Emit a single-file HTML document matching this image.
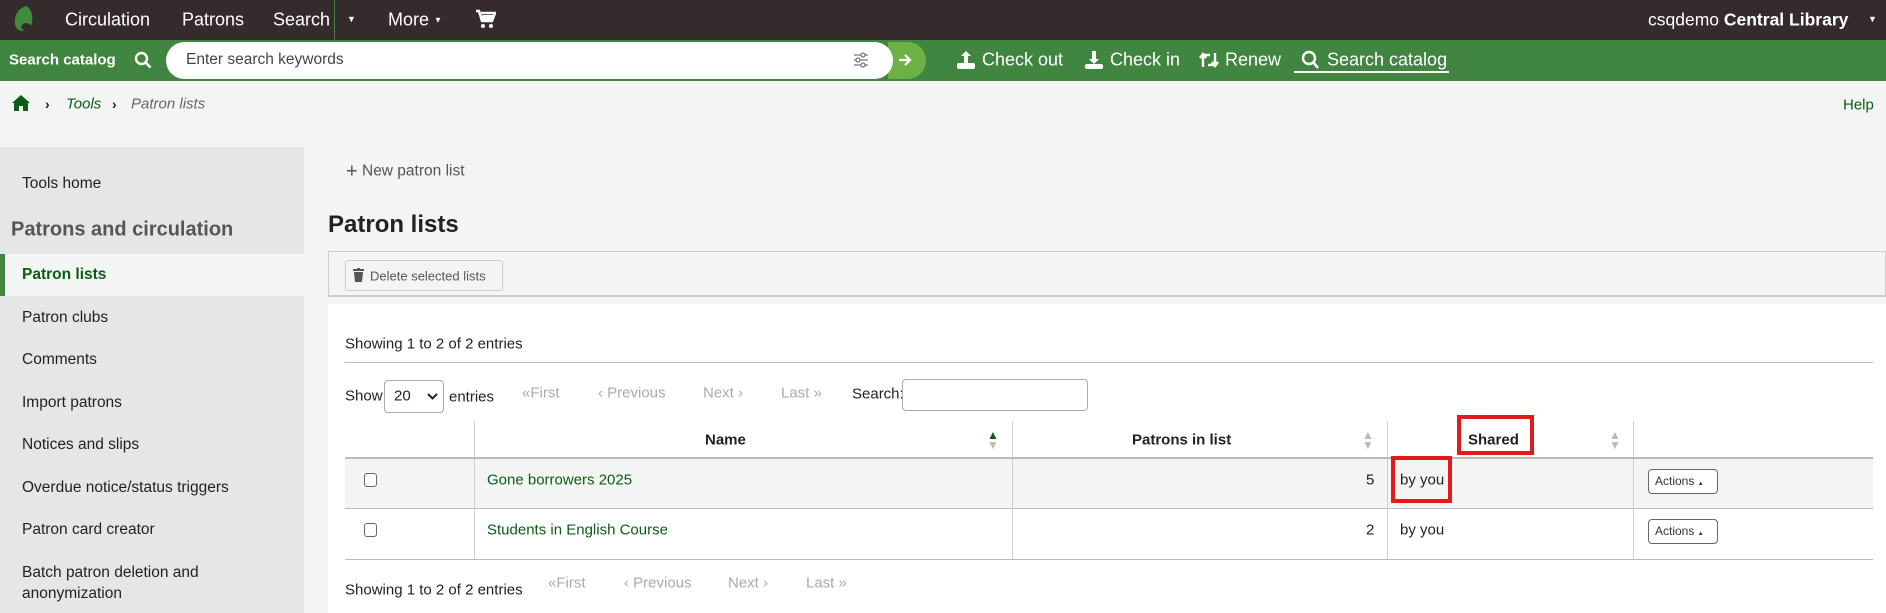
<!DOCTYPE html>
<html><head><meta charset="utf-8"><style>
*{box-sizing:border-box;margin:0;padding:0}
body{width:1886px;height:613px;overflow:hidden;background:#f3f4f4;font-family:"Liberation Sans",sans-serif;font-size:15px;color:#222;position:relative}
.a{position:absolute;white-space:nowrap}
.top{left:0;top:0;width:1886px;height:40px;background:#352b2d;color:#fff;font-size:18px}
.grn{left:0;top:40px;width:1886px;height:41px;background:#408540;color:#fff}
.side{left:0;top:147px;width:304px;height:466px;background:#e6e6e6}
.si{left:22px;font-size:15.5px;color:#222;transform:translateY(-50%)}
.c{transform:translateY(-50%)}
.pg{color:#aaa;font-size:15px}
.vl{position:absolute;width:1px;background:#d0d0d0}
.btn{border:1px solid #666;border-radius:4px;background:#fff;font-size:12px;color:#333;padding:0 0 0 6px;line-height:23px;width:70px;height:25px}
.red{border:4px solid #e3191c}
.so{font-size:12px;color:#bbb;line-height:10px}
</style></head><body>
<div class="a top">
  <svg class="a" style="left:12px;top:5px" width="22" height="28" viewBox="0 0 22 28"><path d="M14 1C5 4 2 12 3 19c1 6 6 8 9 6-3-1-4-4-1-6 3-2 7-1 8 2 3-8 1-17-5-20z" fill="#3f8c3e"/></svg>
  <span class="a c" style="left:65px;top:20px">Circulation</span>
  <span class="a c" style="left:182px;top:20px">Patrons</span>
  <span class="a c" style="left:273px;top:20px">Search</span>
  <div class="a" style="left:334px;top:0;width:1px;height:40px;background:#408540"></div>
  <span class="a c" style="left:347px;top:19px;font-size:9px">▼</span>
  <span class="a c" style="left:388px;top:20px">More <span style="font-size:8px;vertical-align:3px">▼</span></span>
  <svg class="a" style="left:476px;top:9px" width="20" height="20" viewBox="0 0 20 20"><path d="M0 2h3l3 10h10l3-8H5" fill="none" stroke="#fff" stroke-width="2.5"/><rect x="6" y="6" width="11" height="5" fill="#fff"/><circle cx="7" cy="17" r="2" fill="#fff"/><circle cx="15" cy="17" r="2" fill="#fff"/></svg>
  <span class="a c" style="left:1648px;top:20px;font-size:17.5px">csqdemo <b>Central Library</b></span>
  <span class="a c" style="left:1868px;top:19px;font-size:9px">▼</span>
</div>
<div class="a grn">
  <span class="a c" style="left:9px;top:20px;font-weight:bold;font-size:15px">Search catalog</span>
  <svg class="a" style="left:134px;top:11px" width="18" height="18" viewBox="0 0 18 18"><circle cx="7.5" cy="7.5" r="5.5" fill="none" stroke="#fff" stroke-width="2.4"/><path d="M11.5 11.5l5 5" stroke="#fff" stroke-width="2.6"/></svg>
  <div class="a" style="left:888px;top:2px;width:38px;height:37px;background:#6db146;border-radius:0 19px 19px 0"></div>
  <div class="a" style="left:166px;top:2px;width:727px;height:37px;background:#fff;border-radius:19px"></div>
  <span class="a c" style="left:186px;top:20px;color:#444;font-size:15.5px">Enter search keywords</span>
  <svg class="a" style="left:853px;top:12px" width="16" height="16" viewBox="0 0 16 16" stroke="#777" stroke-width="1.3" fill="#fff"><path d="M1 3h14M1 8h14M1 13h14"/><circle cx="10" cy="3" r="2"/><circle cx="5" cy="8" r="2"/><circle cx="10" cy="13" r="2"/></svg>
  <svg class="a" style="left:898px;top:13px" width="14" height="14" viewBox="0 0 14 14"><path d="M1 7h11M7 2l5 5-5 5" fill="none" stroke="#fff" stroke-width="2.2"/></svg>
  <svg class="a" style="left:956px;top:10px" width="20" height="20" viewBox="0 0 20 20" fill="#fff"><path d="M10 1l-5 5h3v7h4V6h3z"/><rect x="1" y="13" width="18" height="6" rx="2"/></svg>
  <span class="a c" style="left:982px;top:20px;font-size:18px">Check out</span>
  <svg class="a" style="left:1084px;top:10px" width="20" height="20" viewBox="0 0 20 20" fill="#fff"><path d="M10 14l-5-5h3V1h4v8h3z"/><rect x="1" y="14" width="18" height="5" rx="2"/></svg>
  <span class="a c" style="left:1110px;top:20px;font-size:18px">Check in</span>
  <svg class="a" style="left:1199px;top:12px" width="20" height="16" viewBox="0 0 20 16" fill="none" stroke="#fff" stroke-width="2.4"><path d="M4 15V3h7M1 6l3-4 3 4"/><path d="M16 1v12H9M19 10l-3 4-3-4"/></svg>
  <span class="a c" style="left:1225px;top:20px;font-size:18px">Renew</span>
  <svg class="a" style="left:1301px;top:10px" width="19" height="20" viewBox="0 0 19 20"><circle cx="8" cy="8" r="6" fill="none" stroke="#fff" stroke-width="2.4"/><path d="M12 12l5 6" stroke="#fff" stroke-width="2.6"/></svg>
  <span class="a c" style="left:1327px;top:20px;font-size:18px">Search catalog</span>
  <div class="a" style="left:1294px;top:31px;width:155px;height:2px;background:#fff"></div>
</div>
<svg class="a" style="left:12px;top:95px" width="18" height="16" viewBox="0 0 18 16"><path d="M9 0L0 8h2v8h5v-5h4v5h5V8h2z" fill="#0b5d14"/></svg>
<span class="a c" style="left:45px;top:104px;font-weight:bold;font-size:14px">›</span>
<span class="a c" style="left:66px;top:104px;font-style:italic;color:#0b5d14">Tools</span>
<span class="a c" style="left:112px;top:104px;font-weight:bold;font-size:14px">›</span>
<span class="a c" style="left:131px;top:104px;font-style:italic;color:#666">Patron lists</span>
<span class="a c" style="left:1843px;top:105px;color:#0b5d14">Help</span>

<div class="a side"></div>
<span class="a si" style="top:184px">Tools home</span>
<span class="a si" style="left:11px;top:230px;font-size:20px;font-weight:bold;color:#555">Patrons and circulation</span>
<div class="a" style="left:0;top:254px;width:304px;height:42px;background:#f3f4f4;border-left:5px solid #408540"></div>
<span class="a si" style="top:275px;font-weight:bold;color:#0b5d14">Patron lists</span>
<span class="a si" style="top:318px">Patron clubs</span>
<span class="a si" style="top:360px">Comments</span>
<span class="a si" style="top:403px">Import patrons</span>
<span class="a si" style="top:445px">Notices and slips</span>
<span class="a si" style="top:488px">Overdue notice/status triggers</span>
<span class="a si" style="top:530px">Patron card creator</span>
<span class="a si" style="top:573px">Batch patron deletion and</span>
<span class="a si" style="top:594px">anonymization</span>

<span class="a c" style="left:346px;top:172px;color:#555;font-size:15.5px"><span style="font-size:20px;vertical-align:-2px">+</span> New patron list</span>
<span class="a c" style="left:328px;top:225px;font-size:24px;font-weight:bold;color:#222">Patron lists</span>
<div class="a" style="left:328px;top:251px;width:1558px;height:46px;border:1px solid #ccc;border-bottom:2px solid #ccc;background:#f3f4f4"></div>
<div class="a" style="left:345px;top:260px;width:158px;height:31px;border:1px solid #ccc;border-radius:3px;background:#f3f4f4"></div>
<svg class="a" style="left:353px;top:268px" width="11" height="14" viewBox="0 0 11 14" fill="#555"><rect x="0" y="1" width="11" height="2"/><rect x="4" y="0" width="3" height="2"/><path d="M1 4h9l-1 10H2z"/></svg>
<span class="a c" style="left:370px;top:276px;font-size:13px;color:#555">Delete selected lists</span>

<div class="a" style="left:328px;top:304px;width:1558px;height:309px;background:#fff"></div>
<span class="a c" style="left:345px;top:344px">Showing 1 to 2 of 2 entries</span>
<div class="a" style="left:345px;top:362px;width:1528px;height:1px;background:#bbb"></div>
<span class="a c" style="left:345px;top:396px">Show</span>
<div class="a" style="left:384px;top:380px;width:60px;height:33px;border:1px solid #aaa;border-radius:4px"></div>
<span class="a c" style="left:394px;top:396px">20</span>
<svg class="a" style="left:427px;top:393px" width="11" height="7" viewBox="0 0 11 7"><path d="M1 1l4.5 4.5L10 1" fill="none" stroke="#222" stroke-width="2"/></svg>
<span class="a c" style="left:449px;top:397px">entries</span>
<span class="a c pg" style="left:522px;top:393px">«First</span>
<span class="a c pg" style="left:598px;top:393px">‹ Previous</span>
<span class="a c pg" style="left:703px;top:393px">Next ›</span>
<span class="a c pg" style="left:781px;top:393px">Last »</span>
<span class="a c" style="left:852px;top:394px">Search:</span>
<div class="a" style="left:902px;top:379px;width:186px;height:32px;border:1px solid #aaa;border-radius:4px"></div>

<div class="vl" style="left:474px;top:421px;height:138px"></div>
<div class="vl" style="left:1012px;top:421px;height:138px"></div>
<div class="vl" style="left:1387px;top:421px;height:138px"></div>
<div class="vl" style="left:1633px;top:421px;height:138px"></div>
<div class="a" style="left:345px;top:457px;width:1528px;height:2px;background:#bbb"></div>
<div class="a" style="left:345px;top:459px;width:1528px;height:49px;background:#f3f4f4"></div>
<div class="a" style="left:345px;top:508px;width:1528px;height:1px;background:#bbb"></div>
<div class="a" style="left:345px;top:559px;width:1528px;height:1px;background:#bbb"></div>
<div class="vl" style="left:474px;top:459px;height:100px"></div>
<div class="vl" style="left:1012px;top:459px;height:100px"></div>
<div class="vl" style="left:1387px;top:459px;height:100px"></div>
<div class="vl" style="left:1633px;top:459px;height:100px"></div>

<span class="a c" style="left:705px;top:440px;font-weight:bold">Name</span>
<div class="a so" style="left:987px;top:430px"><span style="color:#0b5d14">▲</span><br>▼</div>
<span class="a c" style="left:1132px;top:440px;font-weight:bold">Patrons in list</span>
<div class="a so" style="left:1362px;top:430px">▲<br>▼</div>
<span class="a c" style="left:1468px;top:440px;font-weight:bold">Shared</span>
<div class="a so" style="left:1609px;top:430px">▲<br>▼</div>

<div class="a" style="left:364px;top:473px;width:13px;height:14px;border:1px solid #666;border-radius:3px;background:#fff"></div>
<div class="a" style="left:364px;top:523px;width:13px;height:14px;border:1px solid #666;border-radius:3px;background:#fff"></div>
<span class="a c" style="left:487px;top:480px;color:#0b5d14">Gone borrowers 2025</span>
<span class="a c" style="left:487px;top:530px;color:#0b5d14">Students in English Course</span>
<span class="a c" style="left:1366px;top:480px">5</span>
<span class="a c" style="left:1366px;top:530px">2</span>
<span class="a c" style="left:1400px;top:480px">by you</span>
<span class="a c" style="left:1400px;top:530px">by you</span>
<div class="a btn" style="left:1648px;top:469px">Actions <span style="font-size:6px">▲</span></div>
<div class="a btn" style="left:1648px;top:519px">Actions <span style="font-size:6px">▲</span></div>
<div class="a red" style="left:1457px;top:415px;width:77px;height:40px"></div>
<div class="a red" style="left:1391px;top:456px;width:61px;height:47px"></div>

<span class="a c" style="left:345px;top:590px">Showing 1 to 2 of 2 entries</span>
<span class="a c pg" style="left:548px;top:583px">«First</span>
<span class="a c pg" style="left:624px;top:583px">‹ Previous</span>
<span class="a c pg" style="left:728px;top:583px">Next ›</span>
<span class="a c pg" style="left:806px;top:583px">Last »</span>
</body></html>
